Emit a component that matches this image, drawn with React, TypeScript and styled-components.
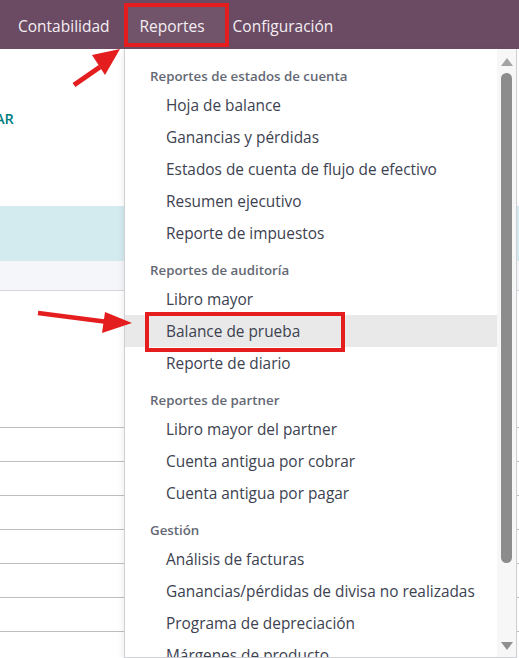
import React from 'react';
import styled, { createGlobalStyle } from 'styled-components';

const GlobalStyle = createGlobalStyle`
  html, body {
    margin: 0;
    padding: 0;
    background: #ffffff;
    font-family: "Open Sans", "Noto Sans", sans-serif;
    overflow: hidden;
  }
`;

type MenuEntry = { label: string; active?: boolean };
type MenuSection = { title: string; items: MenuEntry[] };

const sections: MenuSection[] = [
  {
    title: 'Reportes de estados de cuenta',
    items: [
      { label: 'Hoja de balance' },
      { label: 'Ganancias y pérdidas' },
      { label: 'Estados de cuenta de flujo de efectivo' },
      { label: 'Resumen ejecutivo' },
      { label: 'Reporte de impuestos' },
    ],
  },
  {
    title: 'Reportes de auditoría',
    items: [
      { label: 'Libro mayor' },
      { label: 'Balance de prueba', active: true },
      { label: 'Reporte de diario' },
    ],
  },
  {
    title: 'Reportes de partner',
    items: [
      { label: 'Libro mayor del partner' },
      { label: 'Cuenta antigua por cobrar' },
      { label: 'Cuenta antigua por pagar' },
    ],
  },
  {
    title: 'Gestión',
    items: [
      { label: 'Análisis de facturas' },
      { label: 'Ganancias/pérdidas de divisa no realizadas' },
      { label: 'Programa de depreciación' },
      { label: 'Márgenes de producto' },
    ],
  },
];

const Page = styled.div`
  position: relative;
  width: 519px;
  height: 658px;
  overflow: hidden;
  background: #ffffff;
`;

const Navbar = styled.nav`
  display: flex;
  align-items: center;
  height: 49px;
  padding-left: 3px;
  background: #6a4b63;
`;

const NavItem = styled.div<{ $active?: boolean }>`
  position: relative;
  display: flex;
  align-items: center;
  height: 49px;
  box-sizing: border-box;
  padding: ${({ $active }) => ($active ? '3px 13px 0 15px' : '3px 15px 0')};
  color: #f4eef3;
  font-size: 15.5px;

  & > span {
    position: relative;
    z-index: 1;
  }

  ${({ $active }) =>
    $active &&
    `
    &::after {
      content: '';
      position: absolute;
      top: 3px;
      bottom: 2px;
      left: -1px;
      right: -11px;
      border: 4px solid #e41e1e;
      background: rgba(255, 255, 255, 0.05);
    }
  `}
`;

const Content = styled.div`
  display: flex;
  flex-direction: column;
`;

const TopArea = styled.div`
  height: 157px;
  padding-top: 60px;
  box-sizing: border-box;
`;

const ClippedTitle = styled.div`
  margin-left: -5px;
  color: #017e84;
  font-size: 14.5px;
  font-weight: 600;
`;

const Band = styled.div<{ $bg: string; $h: number; $line?: boolean }>`
  height: ${({ $h }) => $h}px;
  background: ${({ $bg }) => $bg};
  border-bottom: ${({ $line }) => ($line ? '1px solid #d5d7dc' : 'none')};
`;

const Spacer = styled.div`
  height: 136px;
`;

const TableRow = styled.div`
  height: 33px;
  border-top: 1px solid #bdbdbd;
`;

const Dropdown = styled.div`
  position: absolute;
  top: 49px;
  left: 124px;
  width: 393px;
  height: 609px;
  box-sizing: border-box;
  display: flex;
  background: #ffffff;
  border: 1px solid #cfd0d6;
  border-top: none;
  box-shadow: -2px 2px 6px rgba(0, 0, 0, 0.06);
  overflow: hidden;
`;

const MenuList = styled.div`
  flex: 1;
  padding-top: 6px;
`;

const SectionTitle = styled.div`
  height: 26px;
  margin-top: 8px;
  display: flex;
  align-items: center;
  padding-left: 25px;
  color: #646874;
  font-size: 13.3px;
  font-weight: 600;
`;

const MenuItem = styled.div<{ $active?: boolean }>`
  height: 32px;
  display: flex;
  align-items: center;
  padding-left: 41px;
  color: #3c4250;
  font-size: 15.4px;
  white-space: nowrap;
  background: ${({ $active }) => ($active ? '#e9e9e9' : 'transparent')};
`;

const Marked = styled.span`
  position: relative;

  &::after {
    content: '';
    position: absolute;
    top: -9px;
    bottom: -10px;
    left: -21px;
    right: -45px;
    border: 4px solid #e41e1e;
  }
`;

const Scrollbar = styled.div`
  width: 19px;
  display: flex;
  flex-direction: column;
  align-items: center;
  background: #f7f7f7;
  padding-top: 9px;
`;

const ScrollArrow = styled.div<{ $down?: boolean }>`
  width: 0;
  height: 0;
  border-left: 6px solid transparent;
  border-right: 6px solid transparent;
  ${({ $down }) =>
    $down ? 'border-top: 8px solid #8f8f8f;' : 'border-bottom: 8px solid #a3a3a3;'}
  margin-top: ${({ $down }) => ($down ? '79px' : '0')};
`;

const Thumb = styled.div`
  width: 11px;
  height: 490px;
  margin-top: 7px;
  border-radius: 6px;
  background: #8c8c8c;
`;

const ArrowSvg = styled.svg`
  position: absolute;
  left: 0;
  top: 0;
  pointer-events: none;
`;

export default function App() {
  return (
    <>
      <GlobalStyle />
      <Page>
        <Navbar>
          <NavItem><span>Contabilidad</span></NavItem>
          <NavItem $active><span>Reportes</span></NavItem>
          <NavItem><span>Configuración</span></NavItem>
        </Navbar>
        <Content>
          <TopArea>
            <ClippedTitle>AR</ClippedTitle>
          </TopArea>
          <Band $bg="#d3eaee" $h={55} />
          <Band $bg="#f5f6fa" $h={29} $line />
          <Spacer />
          {Array.from({ length: 7 }).map((_, i) => (
            <TableRow key={i} />
          ))}
        </Content>

        <Dropdown>
          <MenuList>
            {sections.map((s) => (
              <React.Fragment key={s.title}>
                <SectionTitle>{s.title}</SectionTitle>
                {s.items.map((it) => (
                  <MenuItem key={it.label} $active={it.active}>
                    {it.active ? <Marked>{it.label}</Marked> : it.label}
                  </MenuItem>
                ))}
              </React.Fragment>
            ))}
          </MenuList>
          <Scrollbar>
            <ScrollArrow />
            <Thumb />
            <ScrollArrow $down />
          </Scrollbar>
        </Dropdown>

        <ArrowSvg width="519" height="658" viewBox="0 0 519 658">
          <line x1="74" y1="85" x2="100" y2="67" stroke="#e41e1e" strokeWidth="5" />
          <polygon points="92,55 120,49 105,75" fill="#e41e1e" />
          <line x1="38" y1="313" x2="108" y2="322" stroke="#e41e1e" strokeWidth="4.5" />
          <polygon points="105,312 132,323 102,333" fill="#e41e1e" />
        </ArrowSvg>
      </Page>
    </>
  );
}
